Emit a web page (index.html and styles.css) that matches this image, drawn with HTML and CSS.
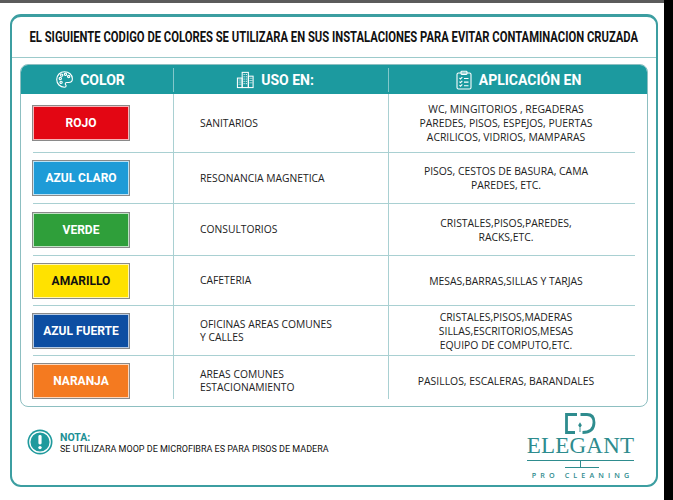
FILE: index.html
```html
<!DOCTYPE html>
<html lang="es">
<head>
<meta charset="utf-8">
<title>Código de colores</title>
<link rel="stylesheet" href="styles.css">
</head>
<body>
<div class="page">
  <div class="card">
    <div class="title"><span class="title-text">EL SIGUIENTE CODIGO DE COLORES SE UTILIZARA EN SUS INSTALACIONES PARA EVITAR CONTAMINACION CRUZADA</span></div>
    <div class="table">
      <div class="thead">
        <div class="th th-color">
          <svg class="ico" width="19" height="19" viewBox="0 0 20 20" fill="none" stroke="#fff" stroke-width="1.2">
            <path d="M10 1.8a8.2 8.2 0 1 0 0 16.4c1.1 0 1.7-.7 1.7-1.5 0-1-.9-1.3-.9-2.2 0-.8.7-1.4 1.5-1.4h2c2.4 0 4-1.8 4-4C18.3 5.2 14.6 1.8 10 1.8z"/>
            <circle cx="5.6" cy="9" r="1.2"/><circle cx="7" cy="5.4" r="1.2"/><circle cx="11" cy="4.5" r="1.2"/><circle cx="14.4" cy="6.8" r="1.2"/><circle cx="6.4" cy="13" r="1.2"/>
          </svg>
          <span>COLOR</span>
        </div>
        <div class="th-sep"></div>
        <div class="th th-uso">
          <svg class="ico" width="19" height="19" viewBox="0 0 20 20" fill="none" stroke="#fff" stroke-width="1.1">
            <rect x="1.5" y="8.5" width="5" height="10"/><rect x="6.5" y="2.5" width="6.5" height="16"/><rect x="13" y="6.5" width="5" height="12"/>
            <g fill="#fff" stroke="none">
              <rect x="2.8" y="10" width="1" height="1"/><rect x="4.6" y="10" width="1" height="1"/><rect x="2.8" y="12.2" width="1" height="1"/><rect x="4.6" y="12.2" width="1" height="1"/><rect x="2.8" y="14.4" width="1" height="1"/><rect x="4.6" y="14.4" width="1" height="1"/>
              <rect x="8" y="4.2" width="1.1" height="1.1"/><rect x="10.3" y="4.2" width="1.1" height="1.1"/><rect x="8" y="6.6" width="1.1" height="1.1"/><rect x="10.3" y="6.6" width="1.1" height="1.1"/><rect x="8" y="9" width="1.1" height="1.1"/><rect x="10.3" y="9" width="1.1" height="1.1"/><rect x="8" y="11.4" width="1.1" height="1.1"/><rect x="10.3" y="11.4" width="1.1" height="1.1"/><rect x="8" y="13.8" width="1.1" height="1.1"/><rect x="10.3" y="13.8" width="1.1" height="1.1"/>
              <rect x="14.4" y="8.2" width="1" height="1"/><rect x="16.2" y="8.2" width="1" height="1"/><rect x="14.4" y="10.6" width="1" height="1"/><rect x="16.2" y="10.6" width="1" height="1"/><rect x="14.4" y="13" width="1" height="1"/><rect x="16.2" y="13" width="1" height="1"/>
            </g>
          </svg>
          <span>USO EN:</span>
        </div>
        <div class="th-sep"></div>
        <div class="th th-app">
          <svg class="ico" width="18" height="20" viewBox="0 0 18 20" fill="none" stroke="#fff" stroke-width="1.1">
            <rect x="2" y="3" width="14" height="16" rx="1.5"/>
            <rect x="6" y="1.2" width="6" height="3.2" rx=".8"/>
            <path d="M4.5 8l1 1 1.8-1.8M9 8.5h4.5M4.5 11.6l1 1 1.8-1.8M9 12.1h4.5M4.5 15.2l1 1 1.8-1.8M9 15.7h4.5"/>
          </svg>
          <span>APLICACIÓN EN</span>
        </div>
      </div>
      <div class="tbody">
        <div class="row r1">
          <div class="c1"><div class="swatch rojo">ROJO</div></div>
          <div class="c2">SANITARIOS</div>
          <div class="c3">WC, MINGITORIOS , REGADERAS<br>PAREDES, PISOS, ESPEJOS, PUERTAS<br>ACRILICOS, VIDRIOS, MAMPARAS</div>
        </div>
        <div class="row r2">
          <div class="c1"><div class="swatch azul-claro">AZUL CLARO</div></div>
          <div class="c2">RESONANCIA MAGNETICA</div>
          <div class="c3">PISOS, CESTOS DE BASURA, CAMA<br>PAREDES, ETC.</div>
        </div>
        <div class="row r3">
          <div class="c1"><div class="swatch verde">VERDE</div></div>
          <div class="c2">CONSULTORIOS</div>
          <div class="c3">CRISTALES,PISOS,PAREDES,<br>RACKS,ETC.</div>
        </div>
        <div class="row r4">
          <div class="c1"><div class="swatch amarillo">AMARILLO</div></div>
          <div class="c2">CAFETERIA</div>
          <div class="c3">MESAS,BARRAS,SILLAS Y TARJAS</div>
        </div>
        <div class="row r5">
          <div class="c1"><div class="swatch azul-fuerte">AZUL FUERTE</div></div>
          <div class="c2">OFICINAS AREAS COMUNES<br>Y CALLES</div>
          <div class="c3">CRISTALES,PISOS,MADERAS<br>SILLAS,ESCRITORIOS,MESAS<br>EQUIPO DE COMPUTO,ETC.</div>
        </div>
        <div class="row r6">
          <div class="c1"><div class="swatch naranja">NARANJA</div></div>
          <div class="c2">AREAS COMUNES<br>ESTACIONAMIENTO</div>
          <div class="c3">PASILLOS, ESCALERAS, BARANDALES</div>
        </div>
      </div>
    </div>
    <div class="footer">
      <div class="note">
        <svg class="note-ico" width="26" height="26" viewBox="0 0 26 26">
          <circle cx="13" cy="13" r="12.5" fill="#1f9a9d"/>
          <circle cx="13" cy="13" r="10.2" fill="none" stroke="#fff" stroke-width="1.3"/>
          <rect x="11.4" y="6" width="3.2" height="9.5" rx="1.4" fill="#fff"/>
          <circle cx="13" cy="18.6" r="1.7" fill="#fff"/>
        </svg>
        <div class="note-body">
          <div class="note-title">NOTA:</div>
          <div class="note-text">SE UTILIZARA MOOP DE MICROFIBRA ES PARA PISOS DE MADERA</div>
        </div>
      </div>
      <div class="logo">
        <svg class="mark" width="31" height="21" viewBox="0 0 31 21" fill="none" stroke="#2e8c8e" stroke-width="2.8">
          <path d="M12 1.5H1.5V19.5H10"/>
          <path d="M15.5 1.5H22Q29 1.5 29 9.5Q29 19.5 17.5 19.5"/>
          <polygon points="15,9.3 16.8,12.3 15,15.2 13.2,12.3" fill="#2e8c8e" stroke="none"/>
          <path d="M15 15V19" stroke-width="0.9"/>
        </svg>
        <div class="brand">ELEGANT</div>
        <svg class="rule" width="107" height="8" viewBox="0 0 107 8" fill="none" stroke="#2e8c8e" stroke-width="1">
          <path d="M0 0.5H107M53.5 0.5V7.5M38 7.5H72"/>
        </svg>
        <div class="tag">PRO CLEANING</div>
      </div>
    </div>
  </div>
</div>
</body>
</html>
```

FILE: styles.css
```css
html, body {
  margin: 0;
  padding: 0;
  background: #000;
}

.page {
  width: 664px;
  height: 497px;
  background: #fff;
  border-top: 3px solid #5b5b5b;
  overflow: hidden;
  font-family: "Open Sans", "Liberation Sans", sans-serif;
  color: #222;
}

.card {
  margin: 11px 0 0 10px;
  width: 648px;
  height: 473px;
  box-sizing: border-box;
  border: 2px solid #3c9ea1;
  border-top-width: 3px;
  border-radius: 11px;
  display: flex;
  flex-direction: column;
}

.title {
  height: 40px;
  flex: none;
  border-bottom: 1px solid #9ccacb;
  display: flex;
  align-items: center;
  justify-content: center;
  overflow: visible;
}

.title-text {
  display: inline-block;
  font-family: Roboto, "Liberation Sans", sans-serif;
  font-weight: 700;
  font-size: 15px;
  color: #111;
  white-space: nowrap;
  transform: scaleX(0.75);
  flex: none;
}

.table {
  margin: 6px 8px 0;
  flex: none;
  border: 1px solid #8dbfc1;
  border-radius: 8px;
  overflow: hidden;
}

.thead {
  height: 29px;
  background: #1c9a9f;
  display: flex;
  align-items: center;
  color: #fff;
  font-family: Roboto, "Liberation Sans", sans-serif;
  font-weight: 700;
  font-size: 14px;
}

.th {
  height: 100%;
  box-sizing: border-box;
  display: flex;
  align-items: center;
  justify-content: center;
  gap: 6px;
}

.ico {
  display: block;
  flex: none;
}

.th-color {
  width: 152px;
  padding-right: 14px;
}

.th-uso {
  width: 214px;
  padding-right: 12px;
}

.th-app {
  flex: 1;
}

.th-sep {
  width: 1px;
  height: 24px;
  background: rgba(255, 255, 255, 0.45);
  flex: none;
}

.tbody {
  padding: 0 12px;
}

.row {
  display: grid;
  grid-template-columns: 140px 215px 1fr;
  box-sizing: border-box;
  border-bottom: 1px solid #a9d0d2;
}

.r1 { height: 59px; }
.r2 { height: 51px; }
.r3 { height: 52px; }
.r4 { height: 50px; }
.r5 { height: 50px; }
.r6 { height: 50px; border-bottom: none; }

.c1 {
  display: flex;
  align-items: center;
}

.c2 {
  border-left: 1px solid #a9d0d2;
  padding-left: 26px;
  display: flex;
  align-items: center;
  font-size: 10.3px;
  line-height: 13px;
}

.c3 {
  border-left: 1px solid #a9d0d2;
  padding-right: 12px;
  display: flex;
  align-items: center;
  justify-content: center;
  text-align: center;
  font-size: 10.4px;
  line-height: 14px;
}

.r6 .c2,
.r6 .c3 {
  border-left: none;
  background: linear-gradient(#a9d0d2, #a9d0d2) left top / 1px 43px no-repeat;
}

.r6 .c2 {
  padding-left: 27px;
}

.r6 .c3 {
  padding-left: 1px;
}

.swatch {
  width: 98px;
  height: 36px;
  margin-left: -1px;
  box-sizing: border-box;
  border: 1px solid #8a8a8a;
  box-shadow: inset 0 0 0 1px rgba(255, 255, 255, 0.7);
  display: flex;
  align-items: center;
  justify-content: center;
  font-family: Roboto, "Liberation Sans", sans-serif;
  font-weight: 700;
  font-size: 12px;
  color: #fff;
}

.rojo { background: #e30613; }
.azul-claro { background: #1e9bd7; }
.verde { background: #2f9f3a; }
.amarillo { background: #ffe200; color: #111; }
.azul-fuerte { background: #0d4ea2; }
.naranja { background: #f47a20; }

.footer {
  flex: 1;
  display: flex;
  justify-content: space-between;
  align-items: flex-start;
  padding: 6px 22px 0 15px;
}

.note {
  margin-top: 16px;
  display: flex;
  align-items: center;
  gap: 7px;
}

.note-ico {
  display: block;
  flex: none;
}

.note-body {
  padding-top: 3px;
}

.note-title {
  font-family: Roboto, "Liberation Sans", sans-serif;
  font-weight: 700;
  font-size: 10.5px;
  line-height: 12px;
  color: #1d9095;
}

.note-text {
  font-family: Roboto, "Liberation Sans", sans-serif;
  font-size: 9px;
  line-height: 11px;
  color: #111;
}

.logo {
  width: 107px;
  display: flex;
  flex-direction: column;
  align-items: center;
  color: #2e8c8e;
}

.mark {
  display: block;
}

.brand {
  margin-top: 2px;
  font-family: "Liberation Serif", "Times New Roman", serif;
  font-size: 23px;
  line-height: 20px;
  letter-spacing: 0.2px;
}

.rule {
  display: block;
  margin-top: 4px;
}

.tag {
  margin-top: 3px;
  font-family: "Open Sans", "Liberation Sans", sans-serif;
  font-weight: 600;
  font-size: 7.2px;
  line-height: 9px;
  letter-spacing: 4.1px;
  margin-right: -4.1px;
}
```
